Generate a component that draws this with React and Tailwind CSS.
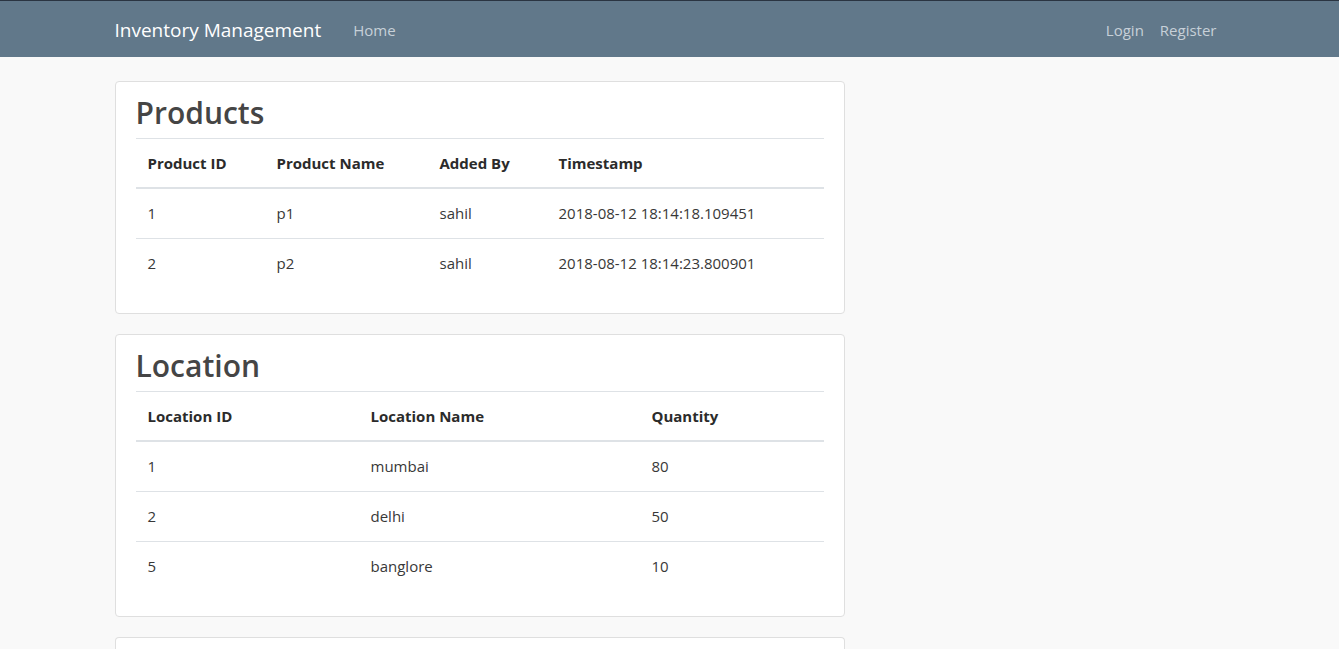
const products = [
  { id: 1, name: 'p1', by: 'sahil', ts: '2018-08-12 18:14:18.109451' },
  { id: 2, name: 'p2', by: 'sahil', ts: '2018-08-12 18:14:23.800901' },
];

const locations = [
  { id: 1, name: 'mumbai', qty: 80 },
  { id: 2, name: 'delhi', qty: 50 },
  { id: 5, name: 'banglore', qty: 10 },
];

function Card({ title, children }) {
  return (
    <section className="mb-[20px] rounded-[4px] border border-[#dfdfdf] bg-white px-[20px] pt-[12px] pb-[25px]">
      <h2 className="mb-[6px] text-[30px] leading-[38px] font-semibold text-[#454545]">
        {title}
      </h2>
      {children}
    </section>
  );
}

function Th({ w, children }) {
  return (
    <th
      className={`${w} border-t border-b-2 border-[#dee2e6] px-[12px] pt-[12px] pb-[11px] text-left text-[15px] leading-[25px] font-bold text-[#2b2b2b]`}
    >
      {children}
    </th>
  );
}

function Td({ children }) {
  return (
    <td className="border-t border-[#dee2e6] px-[12px] py-[12px] text-[15px] leading-[25px] text-[#383838]">
      {children}
    </td>
  );
}

export default function App() {
  return (
    <div
      className="min-h-[649px] bg-[#f9f9f9]"
      style={{ fontFamily: '"Open Sans", "Noto Sans", sans-serif' }}
    >
      <nav className="h-[57px] border-t border-[#2a3441] bg-[#61788a]">
        <div className="mx-auto flex h-[56px] w-[1110px] items-center pt-[2px]">
          <span className="mr-[24px] text-[19px] text-white">Inventory Management</span>
          <a className="px-[8px] text-[15px] text-[#c7d0d8]">Home</a>
          <div className="ml-auto flex">
            <a className="px-[8px] text-[15px] text-[#c7d0d8]">Login</a>
            <a className="pl-[8px] pr-[8px] text-[15px] text-[#c7d0d8]">Register</a>
          </div>
        </div>
      </nav>

      <main className="mx-auto w-[1110px] pt-[24px]">
        <div className="w-[730px]">
          <Card title="Products">
            <table className="w-full border-collapse">
              <thead>
                <tr>
                  <Th w="w-[129px]">Product ID</Th>
                  <Th w="w-[163px]">Product Name</Th>
                  <Th w="w-[119px]">Added By</Th>
                  <Th w="">Timestamp</Th>
                </tr>
              </thead>
              <tbody>
                {products.map((p) => (
                  <tr key={p.id}>
                    <Td>{p.id}</Td>
                    <Td>{p.name}</Td>
                    <Td>{p.by}</Td>
                    <Td>{p.ts}</Td>
                  </tr>
                ))}
              </tbody>
            </table>
          </Card>

          <Card title="Location">
            <table className="w-full border-collapse">
              <thead>
                <tr>
                  <Th w="w-[223px]">Location ID</Th>
                  <Th w="w-[281px]">Location Name</Th>
                  <Th w="">Quantity</Th>
                </tr>
              </thead>
              <tbody>
                {locations.map((l) => (
                  <tr key={l.id}>
                    <Td>{l.id}</Td>
                    <Td>{l.name}</Td>
                    <Td>{l.qty}</Td>
                  </tr>
                ))}
              </tbody>
            </table>
          </Card>

          <section className="h-[40px] rounded-t-[4px] border border-b-0 border-[#dfdfdf] bg-white" />
        </div>
      </main>
    </div>
  );
}
